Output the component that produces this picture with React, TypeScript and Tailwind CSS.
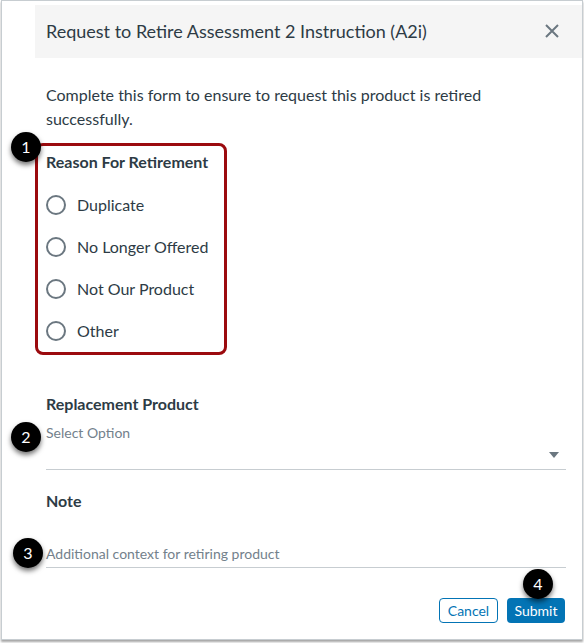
const font = { fontFamily: 'Lato, "Noto Sans", sans-serif' }

function Badge({ n, className }: { n: number; className: string }) {
  return (
    <span
      className={`absolute flex h-[30px] w-[30px] items-center justify-center rounded-full bg-black text-[16px] text-white shadow-[0_3px_5px_rgba(0,0,0,0.55)] ${className}`}
    >
      {n}
    </span>
  )
}

const reasons = ['Duplicate', 'No Longer Offered', 'Not Our Product', 'Other']

export default function App() {
  return (
    <div className="h-[643px] w-[584px] bg-white" style={font}>
      <div className="relative ml-[1px] h-[640px] w-[582px] border border-[#c7cdd1] bg-white shadow-[0_2px_2px_rgba(0,0,0,0.35)]">
        {/* header */}
        <div className="ml-[33px] mt-[4px] flex h-[53px] items-center justify-between bg-[#f5f5f5] pb-[1px] pl-[11px] pr-[23px] text-[#2d3b45]">
          <h2 className="text-[18px] leading-6">Request to Retire Assessment 2 Instruction (A2i)</h2>
          <svg width="14" height="14" viewBox="0 0 14 14" className="text-[#6b7780]">
            <path d="M1 1L13 13M13 1L1 13" stroke="currentColor" strokeWidth="2" />
          </svg>
        </div>

        <div className="pl-[44px] pr-[16px] text-[#2d3b45]">
          <p className="mt-[25px] text-[16px] leading-6">
            Complete this form to ensure to request this product is retired successfully.
          </p>

          {/* reasons */}
          <div className="-ml-[11px] mt-[12px] h-[212px] w-[192px] rounded-[8px] border-[3px] border-[#9b0a0e] pl-[8px] pt-[4px]">
            <div className="text-[16px] font-bold leading-6">Reason For Retirement</div>
            <div className="mt-[10px] flex flex-col">
              {reasons.map((r) => (
                <label key={r} className="flex h-[42px] items-center gap-[11px] text-[16px]">
                  <span className="h-[20px] w-[20px] rounded-full border-2 border-[#6b7780]" />
                  {r}
                </label>
              ))}
            </div>
          </div>

          {/* replacement */}
          <div className="mt-[37px] text-[16px] font-bold leading-6">Replacement Product</div>
          <div className="mt-[7px] text-[14px] leading-5 text-[#73818c]">Select Option</div>
          <div className="flex h-[27px] items-center justify-end border-b border-[#c7cdd1] pr-[7px]">
            <svg width="10" height="6" viewBox="0 0 10 6" className="mt-[-2px]">
              <path d="M0 0H10L5 6Z" fill="#6b7780" />
            </svg>
          </div>

          {/* note */}
          <div className="mt-[19px] text-[16px] font-bold leading-6">Note</div>
          <div className="mt-[31px] border-b border-[#c7cdd1] pb-[3px] text-[14px] leading-5 text-[#73818c]">
            Additional context for retiring product
          </div>

          <div className="mt-[30px] flex justify-end gap-[9px] pr-[1px]">
            <button className="h-[25px] w-[59px] rounded-[4px] border border-[#0374b5] bg-white text-[14px] text-[#0374b5]">
              Cancel
            </button>
            <button className="h-[25px] w-[58px] rounded-[4px] bg-[#0374b5] text-[14px] text-white">
              Submit
            </button>
          </div>
        </div>

        <Badge n={1} className="left-[9px] top-[131px]" />
        <Badge n={2} className="left-[9px] top-[421px]" />
        <Badge n={3} className="left-[11px] top-[537px]" />
        <Badge n={4} className="left-[521px] top-[568px]" />
      </div>
    </div>
  )
}
